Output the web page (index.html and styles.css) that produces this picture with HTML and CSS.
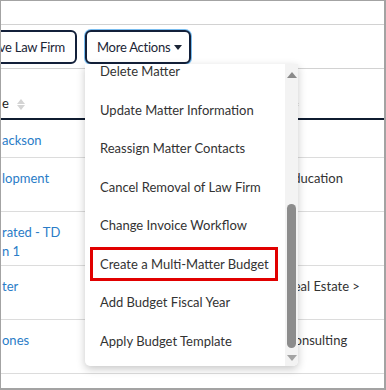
FILE: index.html
```html
<!DOCTYPE html>
<html lang="en">

<head>
  <meta charset="UTF-8">
  <meta name="viewport" content="width=device-width, initial-scale=1.0">
  <title>Matter Actions</title>
  <link rel="stylesheet" href="styles.css">
</head>

<body>

  <div class="frame">
    <div class="topbar"></div>

    <div class="toolbar">
      <button class="btn btn-cut">Remove Law Firm</button>
      <button class="btn btn-focus">More Actions <span class="caret"></span></button>
    </div>

    <div class="table">
      <div class="thead">
        <div class="col-a">e <span class="sort"><span class="sort-up"></span><span class="sort-down"></span></span></div>
        <div class="col-b"><span class="sort"><span class="sort-up"></span><span class="sort-down"></span></span></div>
      </div>
      <div class="row">
        <div class="col-a"><a href="#">ackson</a></div>
        <div class="col-b"></div>
      </div>
      <div class="row tall">
        <div class="col-a"><a href="#">lopment</a></div>
        <div class="col-b">Education</div>
      </div>
      <div class="row tall">
        <div class="col-a"><a href="#">rated - TD<br>n 1</a></div>
        <div class="col-b"></div>
      </div>
      <div class="row tall">
        <div class="col-a"><a href="#">ter</a></div>
        <div class="col-b">Real Estate &gt;</div>
      </div>
      <div class="row tall">
        <div class="col-a"><a href="#">ones</a></div>
        <div class="col-b">Consulting</div>
      </div>
      <div class="row"></div>
    </div>

    <!-- dropdown opened from More Actions -->
    <div class="menu">
      <ul class="menu-list">
        <li class="menu-item first">Delete Matter</li>
        <li class="menu-item">Update Matter Information</li>
        <li class="menu-item">Reassign Matter Contacts</li>
        <li class="menu-item">Cancel Removal of Law Firm</li>
        <li class="menu-item">Change Invoice Workflow</li>
        <li class="menu-item selected">Create a Multi-Matter Budget</li>
        <li class="menu-item">Add Budget Fiscal Year</li>
        <li class="menu-item">Apply Budget Template</li>
      </ul>
      <div class="scrollbar">
        <span class="arrow-up"></span>
        <span class="thumb"></span>
        <span class="arrow-down"></span>
      </div>
    </div>
  </div>

</body>

</html>
```

FILE: styles.css
```css
body {
  margin: 0;
  font-family: 'Lato', 'Liberation Sans', sans-serif;
  background-color: #fff;
}

.frame {
  position: relative;
  width: 386px;
  height: 390px;
  box-sizing: border-box;
  border: 1px solid #a3a3a3;
  border-right-width: 2px;
  border-bottom-width: 2px;
  overflow: hidden;
  background-color: #fff;
}

.topbar {
  height: 23px;
  border-bottom: 1px solid #d2d2d2;
}

.toolbar {
  display: flex;
  gap: 8px;
  height: 44px;
  padding-top: 5px;
  box-sizing: border-box;
  border-bottom: 1px solid #d2d2d2;
  white-space: nowrap;
}

.btn {
  height: 34px;
  padding: 0 11px;
  font-family: inherit;
  font-size: 13px;
  letter-spacing: -0.25px;
  color: #1b2536;
  background-color: #fff;
  border: 2px solid #13203a;
  border-radius: 6px;
  flex-shrink: 0;
}

.btn-cut {
  width: 129px;
  margin-left: -53px;
  text-align: right;
  padding-right: 10px;
}

.btn-focus {
  width: 106px;
  padding: 0 0 0 10px;
  text-align: left;
  box-shadow: 0 0 0 1px #79bdf0;
}

.caret {
  display: inline-block;
  vertical-align: middle;
  margin-left: 1px;
  margin-top: -3px;
  border-left: 4px solid transparent;
  border-right: 4px solid transparent;
  border-top: 5px solid #1b2536;
}

/* table */
.thead,
.row {
  display: flex;
  font-size: 13px;
  line-height: 19px;
}

.thead {
  height: 51px;
  align-items: flex-end;
  padding-bottom: 5px;
  box-sizing: border-box;
  border-bottom: 2px solid #0f1c30;
  color: #222;
}

.row {
  height: 38px;
  padding-top: 11px;
  box-sizing: border-box;
  border-bottom: 1px solid #dcdcdc;
  color: #333;
}

.row.tall {
  height: 54px;
}

.col-a {
  width: 284px;
  padding-left: 1px;
}

.col-b {
  flex: 1;
}

.col-a a {
  color: #2a7cc7;
  text-decoration: none;
}

.sort {
  display: inline-flex;
  flex-direction: column;
  gap: 1px;
  margin-left: 5px;
  vertical-align: middle;
}

.sort-up,
.sort-down {
  border-left: 4px solid transparent;
  border-right: 4px solid transparent;
}

.sort-up {
  border-bottom: 5px solid #d4d4d4;
}

.sort-down {
  border-top: 5px solid #d4d4d4;
}

/* dropdown */
.menu {
  position: absolute;
  left: 84px;
  top: 63px;
  width: 213px;
  height: 302px;
  display: flex;
  background-color: #fff;
  border-radius: 0 0 5px 5px;
  box-shadow: 0 3px 9px rgba(0, 0, 0, 0.22);
  overflow: hidden;
}

.menu-list {
  flex: 1;
  list-style: none;
  margin: 0;
  padding: 0;
  overflow: hidden;
}

.menu-item {
  position: relative;
  margin: 0 7px 0 5px;
  padding: 10px 10px;
  font-size: 13px;
  line-height: 18.5px;
  color: #333;
  white-space: nowrap;
}

.menu-item.first {
  margin-top: -12px;
}

.menu-item.selected::after {
  content: '';
  position: absolute;
  top: 2px;
  bottom: 2px;
  left: 0;
  right: 0;
  border: 3px solid #e10000;
}

.scrollbar {
  width: 13px;
  display: flex;
  flex-direction: column;
  align-items: center;
  background-color: #f3f3f3;
}

.arrow-up {
  margin-top: 8px;
  border-left: 5px solid transparent;
  border-right: 5px solid transparent;
  border-bottom: 6px solid #8a8a8a;
}

.thumb {
  margin-top: 126px;
  width: 9px;
  height: 144px;
  border-radius: 5px;
  background-color: #8c8c8c;
}

.arrow-down {
  margin-top: auto;
  margin-bottom: 5px;
  border-left: 5px solid transparent;
  border-right: 5px solid transparent;
  border-top: 6px solid #a3a3a3;
}
```
